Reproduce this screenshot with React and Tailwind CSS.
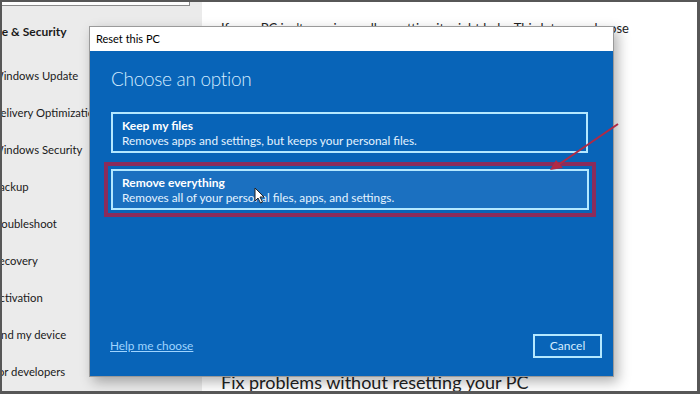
import React from 'react';

const sideItems = [
  'Windows Update',
  'Delivery Optimization',
  'Windows Security',
  'Backup',
  'Troubleshoot',
  'Recovery',
  'Activation',
  'Find my device',
  'For developers',
];

const OptionBox = ({ title, desc, active }) => (
  <div
    className={`border-2 border-[#b4e8ff] h-[41px] pl-[9px] flex flex-col justify-center leading-[15px] ${
      active ? 'bg-[#1b70c0]' : ''
    }`}
  >
    <div className="text-[12px] font-bold text-white">{title}</div>
    <div className="text-[11.8px] text-[#e4f3ff]">{desc}</div>
  </div>
);

const Cursor = () => (
  <svg className="absolute left-[252px] top-[185px]" width="11" height="17" viewBox="0 0 11 17">
    <path d="M1 1 L1 14 L4 11 L6.5 16 L8.5 15 L6 10 L10 10 Z" fill="#ffffff" stroke="#222" strokeWidth="1" />
  </svg>
);

export default function App() {
  return (
    <div
      className="relative w-[700px] h-[394px] overflow-hidden border-t-2 border-l-2 border-r-[3px] border-b-[3px] border-[#575757] bg-white"
      style={{ fontFamily: 'Lato, "Open Sans", sans-serif' }}
    >
      <div className="flex h-full">
        {/* settings sidebar */}
        <div className="w-[200px] h-full bg-[#ebebeb] overflow-hidden text-[#1a1a1a]">
          <div className="w-[188px] h-[4px] bg-white border-b border-r border-[#8a8a8a]" />
          <div className="ml-[-33px] mt-[14px] text-[12px] font-bold h-[24px] leading-[24px] whitespace-nowrap">
            Update &amp; Security
          </div>
          <div className="ml-[-10px] mt-[13px] flex flex-col">
            {sideItems.map((item) => (
              <div key={item} className="h-[37px] leading-[37px] text-[11.3px] whitespace-nowrap">
                {item}
              </div>
            ))}
          </div>
        </div>
        {/* main content */}
        <div className="flex-1 flex flex-col justify-between pl-[19px] text-[#222]">
          <div className="pt-[17px] text-[13px] whitespace-nowrap">
            If your PC isn't running well, resetting it might help. This lets you choose
          </div>
          <div className="text-[18px] leading-[22px] whitespace-nowrap mb-[-2px]">
            Fix problems without resetting your PC
          </div>
        </div>
      </div>

      {/* Reset dialog */}
      <div className="absolute left-[87px] top-[24px] w-[525px] h-[351px] border border-[#9a9a9a] shadow-[4px_5px_12px_rgba(0,0,0,0.3)] flex flex-col">
        <div className="h-[24px] bg-white flex items-center pl-[6px] text-[11px] text-black">
          Reset this PC
        </div>
        <div className="flex-1 bg-[#0864b8] flex flex-col px-[21px] pt-[14px] pb-[18px]">
          <div className="text-[19px] tracking-[-0.3px] font-light text-[#d4ecff] leading-[28px]">
            Choose an option
          </div>
          <div className="mt-[19px] mr-[4px]">
            <OptionBox
              title="Keep my files"
              desc="Removes apps and settings, but keeps your personal files."
            />
          </div>
          <div className="mt-[9px] ml-[-7px] mr-[-4px] border-[4px] border-[#8a2c5c] p-[3px]">
            <OptionBox
              title="Remove everything"
              desc="Removes all of your personal files, apps, and settings."
              active
            />
          </div>
          <div className="flex-1" />
          <div className="flex items-end justify-between">
            <span className="text-[11.8px] text-[#9fd4ff] underline mb-[3px] ml-[-1px]">Help me choose</span>
            <button className="w-[69px] h-[24px] border-2 border-[#b4e8ff] text-[12px] text-[#d4ecff] mr-[-10px]">
              Cancel
            </button>
          </div>
        </div>
      </div>

      <Cursor />

      {/* annotation arrow */}
      <svg className="absolute left-0 top-0" width="700" height="394">
        <line x1="616" y1="122" x2="556" y2="163" stroke="#b02a45" strokeWidth="2" />
        <polygon points="548,168 554,158 561,166" fill="#b02a45" />
      </svg>
    </div>
  );
}
